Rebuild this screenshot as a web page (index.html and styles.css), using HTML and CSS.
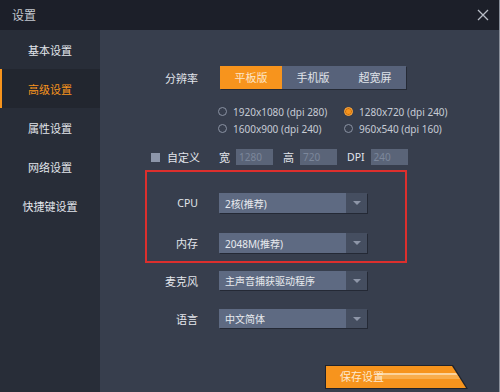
FILE: index.html
```html
<!DOCTYPE html>
<html>
	<head>
	<meta charset="utf-8">
	<link rel="stylesheet" href="styles.css">
	</head>

	<body>
		<div class="window">
			<div class="titlebar">
				<span class="title">设置</span>
				<svg class="close" width="12" height="12" viewBox="0 0 12 12">
					<path d="M1 1 L11 11 M11 1 L1 11" stroke="#b8bdc7" stroke-width="1.3" fill="none"/>
				</svg>
			</div>

			<div class="main">
				<ul class="nav">
					<li class="nav-item">基本设置</li>
					<li class="nav-item active">高级设置</li>
					<li class="nav-item">属性设置</li>
					<li class="nav-item">网络设置</li>
					<li class="nav-item">快捷键设置</li>
				</ul>

				<div class="panel">
					<div class="row row-res">
						<span class="label">分辨率</span>
						<div class="seg">
							<span class="seg-item on">平板版</span>
							<span class="seg-item">手机版</span>
							<span class="seg-item">超宽屏</span>
						</div>
					</div>

					<div class="radios">
						<label class="radio"><i class="dot"></i>1920x1080 (dpi 280)</label>
						<label class="radio"><i class="dot checked"></i>1280x720 (dpi 240)</label>
						<label class="radio"><i class="dot"></i>1600x900 (dpi 240)</label>
						<label class="radio"><i class="dot"></i>960x540 (dpi 160)</label>
					</div>

					<div class="custom">
						<i class="check"></i>
						<span class="custom-label">自定义</span>
						<span class="field-label first">宽</span>
						<span class="field">1280</span>
						<span class="field-label">高</span>
						<span class="field">720</span>
						<span class="field-label latin">DPI</span>
						<span class="field">240</span>
					</div>

					<div class="redbox">
						<div class="row">
							<span class="label small latin">CPU</span>
							<div class="select">
								<span class="sel-text">2核(推荐)</span>
								<span class="sel-arrow"><i></i></span>
							</div>
						</div>
						<div class="row row-mem">
							<span class="label small">内存</span>
							<div class="select">
								<span class="sel-text">2048M(推荐)</span>
								<span class="sel-arrow"><i></i></span>
							</div>
						</div>
					</div>

					<div class="row row-mic">
						<span class="label">麦克风</span>
						<div class="select short">
							<span class="sel-text">主声音捕获驱动程序</span>
							<span class="sel-arrow"><i></i></span>
						</div>
					</div>

					<div class="row row-lang">
						<span class="label">语言</span>
						<div class="select short">
							<span class="sel-text">中文简体</span>
							<span class="sel-arrow"><i></i></span>
						</div>
					</div>

					<div class="save">
						<svg class="save-bg" width="143" height="24" viewBox="0 0 143 24">
							<polygon points="0,0 128,0 143,24 0,24" fill="#1f232c"/>
							<polygon points="1,1 127,1 141,23 1,23" fill="#f7941d"/>
							<polygon points="52,8 131,8 132.5,10 52,10" fill="#fcd39c"/>
							<polygon points="52,10 132.5,10 135,14 52,14" fill="#f9ad4c"/>
						</svg>
						<span class="save-text">保存设置</span>
					</div>
				</div>
			</div>
		</div>
	</body>
</html>
```

FILE: styles.css
```css
body, html {
	margin: 0;
	padding: 0;
}

body {
	width: 500px;
	height: 392px;
	overflow: hidden;
	background: #373e4d;
	font-family: "Noto Sans", "Noto Sans CJK SC", sans-serif;
	font-size: 11px;
	-webkit-font-smoothing: antialiased;
}

.window {
	width: 500px;
	height: 392px;
	box-sizing: border-box;
	border-right: 1px solid #8a909b;
}

.titlebar {
	height: 30px;
	background: #1c1f29;
	display: flex;
	align-items: center;
	justify-content: space-between;
	padding: 0 10px 0 12px;
}

.title {
	color: #c4c8d0;
	font-size: 12px;
}

.main {
	display: flex;
	height: 362px;
}

.nav {
	width: 100px;
	margin: 0;
	padding: 0;
	list-style: none;
	background: #282d38;
}

.nav-item {
	height: 39px;
	line-height: 41px;
	text-align: center;
	color: #e2e5eb;
	border-left: 2px solid transparent;
	padding-right: 2px;
}

.nav-item.active {
	background: #22262f;
	border-left-color: #f7941d;
	color: #f7941d;
}

.panel {
	flex: 1;
	display: flex;
	flex-direction: column;
}

.row {
	display: flex;
	align-items: center;
}

.label {
	width: 98px;
	margin-right: 21px;
	text-align: right;
	color: #e2e5eb;
}

.label.small {
	width: 51px;
}

.latin {
	font-size: 10.5px;
}

.row-res {
	margin-top: 36px;
	height: 23px;
}

.row-res .label {
	margin-right: 22px;
}

.seg {
	display: flex;
	box-shadow: 1px 1px 0 #252a35;
}

.seg-item {
	width: 62px;
	height: 23px;
	line-height: 23px;
	text-align: center;
	background: #57627a;
	color: #e0e4ea;
}

.seg-item.on {
	background: #f7941d;
	color: #fde6c8;
}

.radios {
	display: grid;
	grid-template-columns: 126px auto;
	margin: 14px 0 0 118px;
}

.radio {
	display: flex;
	align-items: center;
	height: 17px;
	color: #c6cbd5;
	font-size: 10px;
}

.dot {
	width: 9px;
	height: 9px;
	box-sizing: border-box;
	border: 1px solid #8a92a3;
	border-radius: 50%;
	margin-right: 6px;
}

.dot.checked {
	border-color: #f6a540;
	background: #f7941d;
	box-shadow: inset 0 0 0 1px #c96f0d;
}

.custom {
	display: flex;
	align-items: center;
	height: 16px;
	margin: 12px 0 0 51px;
	color: #e2e5eb;
}

.check {
	width: 9px;
	height: 9px;
	background: #8d96aa;
	margin-right: 7px;
}

.custom-label {
	width: 33px;
}

.field-label {
	margin-left: 10px;
	margin-right: 6px;
}

.field-label.first {
	margin-left: 19px;
}

.field {
	width: 37px;
	height: 16px;
	line-height: 16px;
	box-sizing: border-box;
	padding-left: 3px;
	background: #5a6478;
	color: #7c879b;
	font-size: 10px;
}

.redbox {
	margin: 5px 0 0 45px;
	width: 262px;
	height: 93px;
	box-sizing: border-box;
	border: 2px solid #dc2f2d;
	padding-top: 21px;
}

.row-mem {
	margin-top: 20px;
}

.select {
	display: flex;
	width: 148px;
	height: 20px;
	box-shadow: 1px 1px 0 #242935;
}

.select.short {
	height: 19px;
}

.sel-text {
	flex: 1;
	background: #5e6a82;
	color: #e8eaef;
	padding-left: 6px;
	display: flex;
	align-items: center;
	font-size: 10px;
}

.sel-arrow {
	width: 21px;
	background: #454e60;
	display: flex;
	align-items: center;
	justify-content: center;
}

.sel-arrow i {
	width: 0;
	height: 0;
	border-left: 4px solid transparent;
	border-right: 4px solid transparent;
	border-top: 4px solid #8e96a8;
}

.row-mic {
	margin-top: 8px;
}

.row-lang {
	margin-top: 19px;
}

.save {
	position: relative;
	margin: 37px 0 0 225px;
	width: 143px;
	height: 24px;
}

.save-bg {
	position: absolute;
	left: 0;
	top: 0;
}

.save-text {
	position: relative;
	display: block;
	padding-left: 15px;
	line-height: 24px;
	color: #fde9d0;
	font-size: 11px;
}
```
